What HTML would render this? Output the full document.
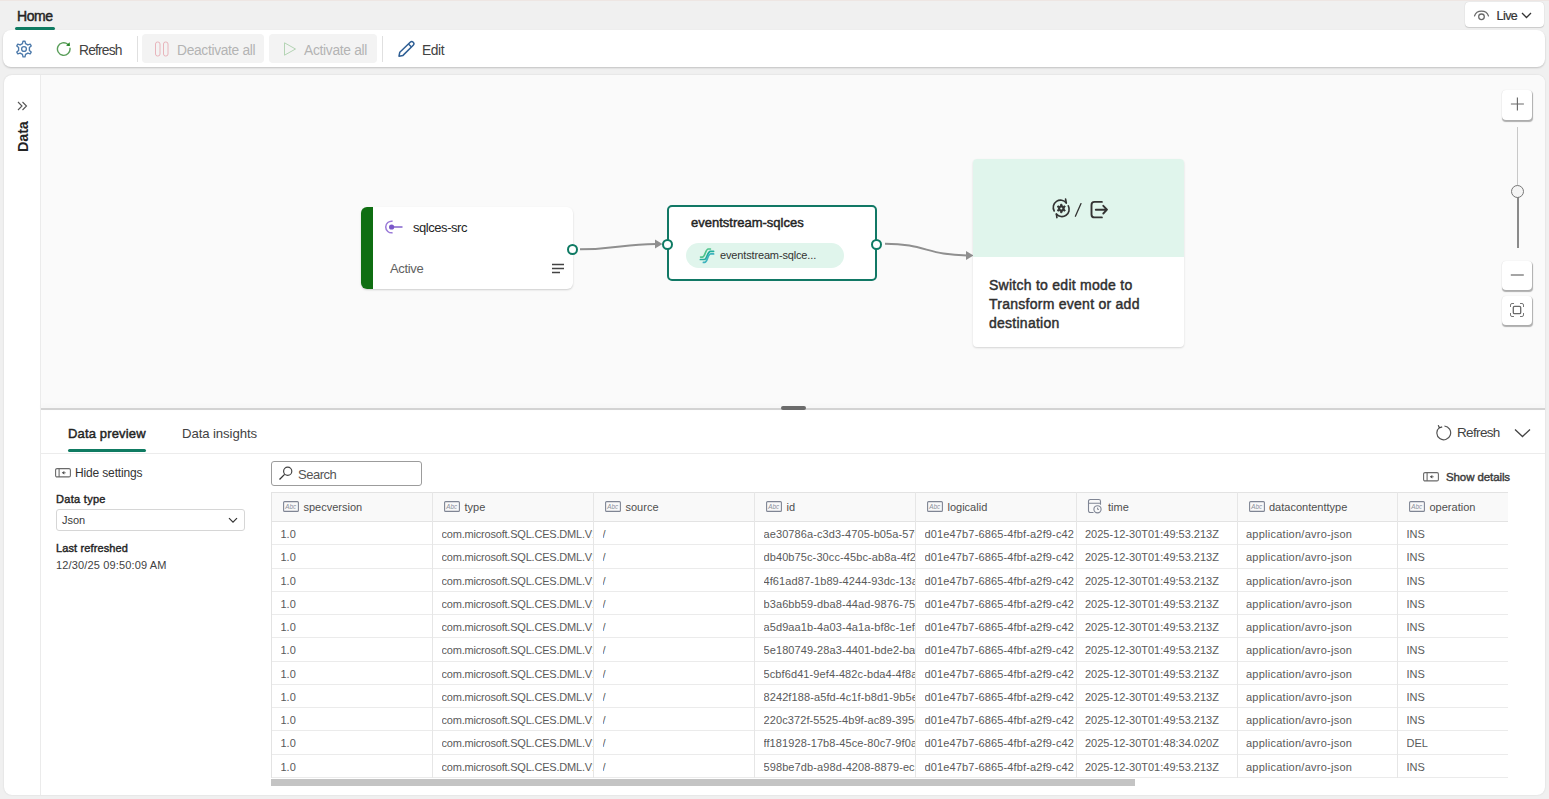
<!DOCTYPE html>
<html><head><meta charset="utf-8">
<style>
*{box-sizing:border-box;margin:0;padding:0}
html,body{width:1549px;height:799px;overflow:hidden}
body{background:#f0f0f0;font-family:"Liberation Sans",sans-serif;color:#242424;position:relative}
.a{position:absolute;white-space:nowrap}
.topline{left:0;top:0;width:1549px;height:1px;background:#eee6e3}
.hometab{left:17px;top:6.5px;font-size:14px;font-weight:normal;line-height:18px;color:#242424;letter-spacing:-0.4px;-webkit-text-stroke:0.45px #242424}
.homeul{left:15px;top:27px;width:40px;height:3px;border-radius:2px;background:#0f7b62}
.live{left:1465px;top:2px;width:79px;height:25px;background:#fff;border-radius:4px;box-shadow:0 1px 1px rgba(0,0,0,.14),0 0 1px rgba(0,0,0,.2)}
.toolbar{left:3px;top:30px;width:1542px;height:37px;background:#fff;border-radius:8px;box-shadow:0 1px 2px rgba(0,0,0,.2)}
.tbtxt{font-size:13.8px;line-height:16px;color:#424242;letter-spacing:-0.55px}
.disbtn{background:#f3f3f3;border-radius:4px}
.sep{width:1px;background:#e0e0e0}
.main{left:4px;top:75px;width:1541px;height:720px;background:#fff;border-radius:8px;box-shadow:0 0 2px rgba(0,0,0,.12);overflow:hidden}
.canvas{left:36px;top:0;width:1505px;height:333px;background:#fafafa}
.splitter{left:36px;top:333px;width:1505px;height:2px;background:#d3d3d3;box-shadow:0 -2px 4px rgba(0,0,0,.04)}
.th{font-size:11px;line-height:14px;color:#4f4f4f}
.td{font-size:11px;line-height:14px;color:#5a5a5a;overflow:hidden;text-overflow:clip}
.sidebar-div{left:36px;top:0;width:1px;height:720px;background:#ebebeb}
</style></head><body>
<div class="a topline"></div>
<div class="a hometab">Home</div>
<div class="a homeul"></div>
<div class="a live"></div>
<svg class="a" style="left:1473px;top:8px" width="17" height="13" viewBox="0 0 17 13"><path d="M1.5 8a7.3 6.8 0 0 1 14 0" fill="none" stroke="#6a6a6a" stroke-width="1.2" stroke-linecap="round"/><circle cx="8.5" cy="8.8" r="2.8" fill="none" stroke="#6a6a6a" stroke-width="1.3"/></svg>
<div class="a" style="left:1496.5px;top:8.5px;font-size:12.5px;line-height:14px;color:#333;letter-spacing:-0.55px;-webkit-text-stroke:0.2px #333">Live</div>
<svg class="a" style="left:1521px;top:12px" width="11" height="7" viewBox="0 0 11 7"><path d="M1 1l4.5 4.5L10 1" fill="none" stroke="#333" stroke-width="1.3"/></svg>

<div class="a toolbar"></div>
<!-- gear -->
<svg class="a" style="left:14.2px;top:38.6px" width="20" height="20" viewBox="0 0 20 20"><path fill="none" stroke="#4d7aab" stroke-width="1.35" stroke-linejoin="round" d="M8.45 4.6 L9 2.2 L11 2.2 L11.55 4.6 L13.9 5.95 L16.2 5.2 L17.2 6.9 L15.4 8.55 L15.4 11.45 L17.2 13.1 L16.2 14.8 L13.9 14.05 L11.55 15.4 L11 17.8 L9 17.8 L8.45 15.4 L6.1 14.05 L3.8 14.8 L2.8 13.1 L4.6 11.45 L4.6 8.55 L2.8 6.9 L3.8 5.2 L6.1 5.95Z"/><circle cx="10" cy="10" r="2.4" fill="none" stroke="#4d7aab" stroke-width="1.35"/></svg>
<!-- refresh -->
<svg class="a" style="left:56px;top:41px" width="16" height="16" viewBox="0 0 16 16"><path fill="none" stroke="#5a9e5a" stroke-width="1.4" stroke-linecap="round" d="M14 7.3A6.3 6.3 0 1 1 11.8 3.2"/><path fill="#1a7f1a" d="M13.6 1.2l.3 3.9-3.8-.4z"/></svg>
<div class="a tbtxt" style="left:79px;top:42.5px;color:#424242;letter-spacing:-0.8px">Refresh</div>
<div class="a sep" style="left:137px;top:36px;height:26px"></div>
<div class="a disbtn" style="left:142px;top:34px;width:122px;height:29px"></div>
<svg class="a" style="left:154px;top:41px" width="16" height="16" viewBox="0 0 16 16"><rect x="1.5" y="1" width="4.5" height="14" rx="2" fill="none" stroke="#e8b4bb" stroke-width="1"/><rect x="9.5" y="1" width="4.5" height="14" rx="2" fill="none" stroke="#e8b4bb" stroke-width="1"/></svg>
<div class="a tbtxt" style="left:177px;top:42.5px;color:#b3b3b3;letter-spacing:-0.33px">Deactivate all</div>
<div class="a disbtn" style="left:269px;top:34px;width:108px;height:29px"></div>
<svg class="a" style="left:282px;top:41px" width="16" height="16" viewBox="0 0 16 16"><path d="M2.5 1.8v12.4l11-6.2z" fill="none" stroke="#b4d4b4" stroke-width="1" stroke-linejoin="round"/></svg>
<div class="a tbtxt" style="left:304px;top:42.5px;color:#b3b3b3;letter-spacing:-0.3px">Activate all</div>
<div class="a sep" style="left:382px;top:36px;height:26px"></div>
<svg class="a" style="left:397px;top:40px" width="18" height="18" viewBox="0 0 18 18"><path d="M13.2 2.2a2.1 2.1 0 0 1 3 3L6 15.4 2 16.2l.8-4z" fill="none" stroke="#2e5e94" stroke-width="1.5" stroke-linejoin="round"/><path d="M11.5 4l2.7 2.7" stroke="#2e5e94" stroke-width="1.3"/></svg>
<div class="a tbtxt" style="left:422px;top:42.5px;color:#424242;letter-spacing:-0.4px">Edit</div>

<div class="a main">
  <div class="a canvas"></div>
  <div class="a splitter"></div>
  <div class="a sidebar-div"></div>
</div>

<!-- sidebar -->
<svg class="a" style="left:17px;top:101px" width="11" height="10" viewBox="0 0 11 10"><path d="M1 1l4 4-4 4M5.5 1l4 4-4 4" fill="none" stroke="#555" stroke-width="1.1"/></svg>
<div class="a" style="left:8px;top:129px;width:30px;height:16px;transform:rotate(-90deg);transform-origin:center;font-size:14.5px;font-weight:bold;line-height:16px;color:#242424;letter-spacing:-0.2px;text-align:center">Data</div>

<!-- source node -->
<div class="a" style="left:361px;top:207px;width:212px;height:82px;background:#fff;border-radius:6px;box-shadow:0 1px 2px rgba(0,0,0,.18);overflow:hidden"><div class="a" style="left:0;top:0;width:12px;height:82px;background:#0f6e12"></div></div>
<svg class="a" style="left:384px;top:219px" width="20" height="16" viewBox="0 0 20 16"><path d="M8.6 2.3A5.8 5.8 0 1 0 8.6 13.7" fill="none" stroke="#9a7ad8" stroke-width="1.5"/><circle cx="7.6" cy="8" r="2.6" fill="#7a58c9"/><path d="M7.6 8H18.5" stroke="#7a58c9" stroke-width="1.4"/></svg>
<div class="a" style="left:413px;top:220px;font-size:13px;line-height:16px;color:#242424;letter-spacing:-0.45px">sqlces-src</div>
<div class="a" style="left:390px;top:261px;font-size:13px;line-height:16px;color:#616161;letter-spacing:-0.35px">Active</div>
<svg class="a" style="left:551px;top:263px" width="14" height="11" viewBox="0 0 14 11"><path d="M1 1.5h12M1 5.5h12M1 9.5h8" stroke="#444" stroke-width="1.4"/></svg>

<!-- edges -->
<svg class="a" style="left:0;top:0" width="1549" height="799" viewBox="0 0 1549 799">
<path d="M580 249.3 C 618 249.3, 622 244, 656 244" fill="none" stroke="#8f8f8f" stroke-width="2"/>
<path d="M655 239.5l7.5 4.5-7.5 4.5z" fill="#8f8f8f"/>
<path d="M885 243.7 C 925 243.7, 928 255.4, 967 255.4" fill="none" stroke="#8f8f8f" stroke-width="2"/>
<path d="M966 250.9l7.5 4.5-7.5 4.5z" fill="#8f8f8f"/>
</svg>
<!-- source port -->
<div class="a" style="left:566.5px;top:243.5px;width:11px;height:11px;border-radius:50%;background:#fff;border:2px solid #0e7a63"></div>

<!-- eventstream node -->
<div class="a" style="left:667px;top:205px;width:210px;height:76px;background:#fff;border:2px solid #117865;border-radius:5px"></div>
<div class="a" style="left:691px;top:215px;font-size:13px;line-height:16px;color:#242424;letter-spacing:0px;-webkit-text-stroke:0.45px #242424">eventstream-sqlces</div>
<div class="a" style="left:686px;top:243px;width:158px;height:25px;border-radius:13px;background:#e0f5ec"></div>
<svg class="a" style="left:690px;top:240px" width="40" height="30" viewBox="0 0 40 30"><g fill="none" stroke-width="1.7" stroke-linecap="round"><path d="M10.6 17.1H12.3C15.3 17.1 15.3 9 18.3 9H20.4" stroke="#4fc28c"/><path d="M10.4 19.5H14.3C17.3 19.5 17.3 11.3 20.3 11.3H23.6" stroke="#22ae9c"/><path d="M13.4 22.4H14.6C17.6 22.4 17.6 13.9 20.6 13.9H23.6" stroke="#3db3bd"/></g></svg>
<div class="a" style="left:720px;top:248px;font-size:11px;line-height:14px;color:#333;letter-spacing:-0.15px">eventstream-sqlce...</div>
<div class="a" style="left:662px;top:239px;width:11px;height:11px;border-radius:50%;background:#fff;border:2px solid #0e7a63"></div>
<div class="a" style="left:870.5px;top:239px;width:11px;height:11px;border-radius:50%;background:#fff;border:2px solid #0e7a63"></div>

<!-- destination card -->
<div class="a" style="left:973px;top:159px;width:211px;height:188px;background:#fff;border-radius:4px;box-shadow:0 1px 2px rgba(0,0,0,.15);overflow:hidden"><div class="a" style="left:0;top:0;width:211px;height:98px;background:#e0f5ec"></div></div>
<svg class="a" style="left:1045px;top:195px" width="70" height="30" viewBox="0 0 70 30">
<g fill="none" stroke="#333" stroke-width="1.6" stroke-linecap="round" stroke-linejoin="round">
<path d="M9.2 16A7.3 7.3 0 0 1 21.3 7.9"/><path d="M20.6 4.1L21.3 7.9"/>
<path d="M23.3 10.8A7.3 7.3 0 0 1 11.4 19.1"/><path d="M11.9 22.6L11.4 19.1"/>
<path fill="#333" stroke-width="0.9" d="M15.40 10.74 L15.70 9.24 L16.90 9.24 L17.20 10.74 L18.24 11.34 L19.69 10.85 L20.29 11.89 L19.14 12.90 L19.14 14.10 L20.29 15.11 L19.69 16.15 L18.24 15.66 L17.20 16.26 L16.90 17.76 L15.70 17.76 L15.40 16.26 L14.36 15.66 L12.91 16.15 L12.31 15.11 L13.46 14.10 L13.46 12.90 L12.31 11.89 L12.91 10.85 L14.36 11.34Z"/>
<circle cx="16.3" cy="13.5" r="1.1" fill="#e0f5ec" stroke="none"/><path stroke-width="1.3" d="M30.4 21.2L36 8.6"/>
<path stroke-width="1.9" d="M56.9 6.9H49.5A3 3 0 0 0 46.5 9.9V19.4A3 3 0 0 0 49.5 22.4H56.9"/>
<path stroke-width="1.9" d="M50.8 14.7H61.8M58.3 10.8L62 14.7 58.3 18.5"/>
</g></svg>
<div class="a" style="left:989px;top:275.5px;font-size:14px;font-weight:normal;line-height:19px;color:#2f2f2f;letter-spacing:0.26px;-webkit-text-stroke:0.45px #2f2f2f;white-space:normal;width:195px">Switch to edit mode to<br>Transform event or add<br>destination</div>

<!-- zoom controls -->
<div class="a" style="left:1502px;top:90px;width:30px;height:30px;background:#fff;border-radius:4px;box-shadow:0.5px 1.5px 1px rgba(0,0,0,.3),0 0 1px rgba(0,0,0,.12)"></div>
<svg class="a" style="left:1508px;top:95px" width="18" height="18" viewBox="0 0 18 18"><path d="M9.4 2.6v13M2.9 9h13" stroke="#6a6a6a" stroke-width="1.15"/></svg>
<div class="a" style="left:1517px;top:127px;width:1px;height:64px;background:#c8c8c8"></div>
<div class="a" style="left:1516.5px;top:191px;width:2px;height:57px;background:#8a8a8a"></div>
<div class="a" style="left:1511px;top:184.5px;width:13px;height:13px;border-radius:50%;background:#f5f5f5;border:1.5px solid #777"></div>
<div class="a" style="left:1502px;top:261px;width:30px;height:29px;background:#fff;border-radius:4px;box-shadow:0.5px 1.5px 1px rgba(0,0,0,.3),0 0 1px rgba(0,0,0,.12)"></div>
<svg class="a" style="left:1508px;top:266px" width="18" height="18" viewBox="0 0 18 18"><path d="M2.8 9h13" stroke="#6a6a6a" stroke-width="1.2"/></svg>
<div class="a" style="left:1502px;top:296px;width:30px;height:29px;background:#fff;border-radius:4px;box-shadow:0.5px 1.5px 1px rgba(0,0,0,.3),0 0 1px rgba(0,0,0,.12)"></div>
<svg class="a" style="left:1509px;top:302px" width="16" height="16" viewBox="0 0 16 16"><path d="M1.5 5V3a1.5 1.5 0 0 1 1.5-1.5h2M11 1.5h2A1.5 1.5 0 0 1 14.5 3v2M14.5 11v2a1.5 1.5 0 0 1-1.5 1.5h-2M5 14.5H3A1.5 1.5 0 0 1 1.5 13v-2" fill="none" stroke="#777" stroke-width="1"/><rect x="4.3" y="4.3" width="7.4" height="7.4" rx="1.2" fill="none" stroke="#6a6a6a" stroke-width="1.3"/></svg>

<!-- splitter handle -->
<div class="a" style="left:781px;top:406px;width:25px;height:4px;border-radius:2px;background:#6b6b6b"></div>
<!-- tabs -->
<div class="a" style="left:68px;top:426px;font-size:13px;line-height:16px;color:#242424;letter-spacing:0.15px;-webkit-text-stroke:0.45px #242424">Data preview</div>
<div class="a" style="left:182px;top:426px;font-size:13.2px;line-height:16px;color:#424242;letter-spacing:-0.1px">Data insights</div>
<div class="a" style="left:68px;top:449px;width:78px;height:3px;border-radius:2px;background:#0f7b62"></div>
<div class="a" style="left:40px;top:453px;width:1505px;height:1px;background:#ececec"></div>
<svg class="a" style="left:1435px;top:423.5px" width="18" height="17" viewBox="0 0 18 17"><path d="M4.3 3.6A6.9 6.9 0 1 0 9.4 2" fill="none" stroke="#555" stroke-width="1.2"/><path d="M3.2 1.2l1.3 2.6 2.7-.9" fill="none" stroke="#444" stroke-width="1.2"/></svg>
<div class="a" style="left:1457px;top:424.5px;font-size:13.5px;line-height:16px;color:#424242;letter-spacing:-0.65px">Refresh</div>
<svg class="a" style="left:1514px;top:428px" width="17" height="10" viewBox="0 0 17 10"><path d="M1 1.5l7.5 7 7.5-7" fill="none" stroke="#444" stroke-width="1.3"/></svg>
<!-- settings -->
<svg class="a" style="left:55.2px;top:467.5px" width="16" height="10" viewBox="0 0 16 10"><rect x="0.6" y="0.6" width="14.8" height="8.3" rx="1.4" fill="none" stroke="#6a6a6a" stroke-width="1.1"/><path d="M4.1 .6v8.3" stroke="#6a6a6a" stroke-width="1.1"/><path d="M6.8 4.75L9.3 2.9v3.7z" fill="#444"/><path d="M8.5 4.75h2.2" stroke="#777" stroke-width="1"/></svg>
<div class="a" style="left:75px;top:466px;font-size:12px;line-height:14px;color:#333;letter-spacing:-0.15px">Hide settings</div>
<div class="a" style="left:56px;top:492px;font-size:11px;line-height:14px;color:#242424;letter-spacing:0.3px;-webkit-text-stroke:0.4px #242424">Data type</div>
<div class="a" style="left:56px;top:509px;width:189px;height:22px;border:1px solid #d6d6d6;border-radius:3px;background:#fff"></div>
<div class="a" style="left:62px;top:513px;font-size:11px;line-height:14px;color:#3a3a3a">Json</div>
<svg class="a" style="left:228px;top:516.5px" width="10" height="7" viewBox="0 0 10 7"><path d="M1 1.2l4 4 4-4" fill="none" stroke="#333" stroke-width="1.2"/></svg>
<div class="a" style="left:56px;top:541px;font-size:11px;line-height:14px;color:#242424;letter-spacing:0.12px;-webkit-text-stroke:0.4px #242424">Last refreshed</div>
<div class="a" style="left:56px;top:558px;font-size:11px;line-height:14px;color:#424242;letter-spacing:0.15px">12/30/25 09:50:09 AM</div>
<!-- search -->
<div class="a" style="left:271px;top:461px;width:151px;height:25px;border:1px solid #9c9c9c;border-radius:3px;background:#fff"></div>
<svg class="a" style="left:278px;top:465px" width="16" height="16" viewBox="0 0 16 16"><circle cx="9.7" cy="6.3" r="4.1" fill="none" stroke="#444" stroke-width="1.2"/><path d="M6.6 9.4L1.5 14.5" stroke="#333" stroke-width="1.3"/></svg>
<div class="a" style="left:298px;top:466.5px;font-size:13px;line-height:16px;color:#555;letter-spacing:-0.5px">Search</div>
<!-- show details -->
<svg class="a" style="left:1423.3px;top:471.5px" width="16" height="10" viewBox="0 0 16 10"><rect x="0.6" y="0.6" width="14.8" height="8.3" rx="1.4" fill="none" stroke="#6a6a6a" stroke-width="1.1"/><path d="M4.1 .6v8.3" stroke="#6a6a6a" stroke-width="1.1"/><path d="M6.8 4.75L9.3 2.9v3.7z" fill="#444"/><path d="M8.5 4.75h2.2" stroke="#777" stroke-width="1"/></svg>
<div class="a" style="left:1446px;top:470px;font-size:11.5px;line-height:14px;color:#3a3a3a;letter-spacing:-0.1px;-webkit-text-stroke:0.4px #3a3a3a">Show details</div>
<!-- table -->
<div class="a" style="left:271px;top:492px;width:1237px;height:286px;border-top:1px solid #e3e3e3;border-left:1px solid #e3e3e3"></div>
<div class="a" style="left:272px;top:493px;width:1236px;height:29px;background:#f9f9f9;border-bottom:1px solid #e3e3e3"></div>
<div class="a" style="left:272px;top:544.27px;width:1236px;height:1px;background:#ebebeb"></div>
<div class="a" style="left:272px;top:567.54px;width:1236px;height:1px;background:#ebebeb"></div>
<div class="a" style="left:272px;top:590.81px;width:1236px;height:1px;background:#ebebeb"></div>
<div class="a" style="left:272px;top:614.08px;width:1236px;height:1px;background:#ebebeb"></div>
<div class="a" style="left:272px;top:637.35px;width:1236px;height:1px;background:#ebebeb"></div>
<div class="a" style="left:272px;top:660.62px;width:1236px;height:1px;background:#ebebeb"></div>
<div class="a" style="left:272px;top:683.89px;width:1236px;height:1px;background:#ebebeb"></div>
<div class="a" style="left:272px;top:707.16px;width:1236px;height:1px;background:#ebebeb"></div>
<div class="a" style="left:272px;top:730.43px;width:1236px;height:1px;background:#ebebeb"></div>
<div class="a" style="left:272px;top:753.70px;width:1236px;height:1px;background:#ebebeb"></div>
<div class="a" style="left:272px;top:776.97px;width:1236px;height:1px;background:#ebebeb"></div>
<div class="a" style="left:432px;top:492px;width:1px;height:286px;background:#e6e6e6"></div>
<div class="a" style="left:593px;top:492px;width:1px;height:286px;background:#e6e6e6"></div>
<div class="a" style="left:754px;top:492px;width:1px;height:286px;background:#e6e6e6"></div>
<div class="a" style="left:915px;top:492px;width:1px;height:286px;background:#e6e6e6"></div>
<div class="a" style="left:1075.5px;top:492px;width:1px;height:286px;background:#e6e6e6"></div>
<div class="a" style="left:1236.5px;top:492px;width:1px;height:286px;background:#e6e6e6"></div>
<div class="a" style="left:1397px;top:492px;width:1px;height:286px;background:#e6e6e6"></div>
<svg class="a" style="left:283px;top:500.5px" width="16" height="11" viewBox="0 0 16 11"><rect x="0.6" y="0.6" width="14.8" height="9.8" rx="1" fill="none" stroke="#7f8594" stroke-width="1.1"/><text x="2.3" y="7.8" font-family="Liberation Sans" font-size="6.3" font-style="italic" fill="#8a909c">Abc</text></svg>
<div class="a th" style="left:303.5px;top:500px">specversion</div>
<svg class="a" style="left:444px;top:500.5px" width="16" height="11" viewBox="0 0 16 11"><rect x="0.6" y="0.6" width="14.8" height="9.8" rx="1" fill="none" stroke="#7f8594" stroke-width="1.1"/><text x="2.3" y="7.8" font-family="Liberation Sans" font-size="6.3" font-style="italic" fill="#8a909c">Abc</text></svg>
<div class="a th" style="left:464.5px;top:500px">type</div>
<svg class="a" style="left:605px;top:500.5px" width="16" height="11" viewBox="0 0 16 11"><rect x="0.6" y="0.6" width="14.8" height="9.8" rx="1" fill="none" stroke="#7f8594" stroke-width="1.1"/><text x="2.3" y="7.8" font-family="Liberation Sans" font-size="6.3" font-style="italic" fill="#8a909c">Abc</text></svg>
<div class="a th" style="left:625.5px;top:500px">source</div>
<svg class="a" style="left:766px;top:500.5px" width="16" height="11" viewBox="0 0 16 11"><rect x="0.6" y="0.6" width="14.8" height="9.8" rx="1" fill="none" stroke="#7f8594" stroke-width="1.1"/><text x="2.3" y="7.8" font-family="Liberation Sans" font-size="6.3" font-style="italic" fill="#8a909c">Abc</text></svg>
<div class="a th" style="left:786.5px;top:500px">id</div>
<svg class="a" style="left:927px;top:500.5px" width="16" height="11" viewBox="0 0 16 11"><rect x="0.6" y="0.6" width="14.8" height="9.8" rx="1" fill="none" stroke="#7f8594" stroke-width="1.1"/><text x="2.3" y="7.8" font-family="Liberation Sans" font-size="6.3" font-style="italic" fill="#8a909c">Abc</text></svg>
<div class="a th" style="left:947.5px;top:500px">logicalid</div>
<svg class="a" style="left:1086.5px;top:498px" width="16" height="16" viewBox="0 0 16 16"><path d="M6.5 14.5H3.2a1.7 1.7 0 0 1-1.7-1.7V3.2A1.7 1.7 0 0 1 3.2 1.5h8.6a1.7 1.7 0 0 1 1.7 1.7V6.8M1.5 5.2h12" fill="none" stroke="#7f8594" stroke-width="1.1"/><circle cx="10.5" cy="11.3" r="3.6" fill="#f9f9f9" stroke="#7f8594" stroke-width="1.1"/><path d="M10.6 9.6v1.8h1.3" fill="none" stroke="#7f8594" stroke-width="1"/></svg>
<div class="a th" style="left:1108.0px;top:500px">time</div>
<svg class="a" style="left:1248.5px;top:500.5px" width="16" height="11" viewBox="0 0 16 11"><rect x="0.6" y="0.6" width="14.8" height="9.8" rx="1" fill="none" stroke="#7f8594" stroke-width="1.1"/><text x="2.3" y="7.8" font-family="Liberation Sans" font-size="6.3" font-style="italic" fill="#8a909c">Abc</text></svg>
<div class="a th" style="left:1269.0px;top:500px">datacontenttype</div>
<svg class="a" style="left:1409px;top:500.5px" width="16" height="11" viewBox="0 0 16 11"><rect x="0.6" y="0.6" width="14.8" height="9.8" rx="1" fill="none" stroke="#7f8594" stroke-width="1.1"/><text x="2.3" y="7.8" font-family="Liberation Sans" font-size="6.3" font-style="italic" fill="#8a909c">Abc</text></svg>
<div class="a th" style="left:1429.5px;top:500px">operation</div>
<div class="a td" style="left:280.5px;top:527.00px;width:151.5px">1.0</div>
<div class="a td" style="left:441.5px;top:527.00px;width:151.5px;letter-spacing:-0.2px">com.microsoft.SQL.CES.DML.V1.Insert</div>
<div class="a td" style="left:602.5px;top:527.00px;width:151.5px">/</div>
<div class="a td" style="left:763.5px;top:527.00px;width:151.5px;letter-spacing:0.1px">ae30786a-c3d3-4705-b05a-57f2a1c9</div>
<div class="a td" style="left:924.5px;top:527.00px;width:151px;letter-spacing:0.15px">d01e47b7-6865-4fbf-a2f9-c42</div>
<div class="a td" style="left:1085px;top:527.00px;width:151.5px">2025-12-30T01:49:53.213Z</div>
<div class="a td" style="left:1246px;top:527.00px;width:151px;letter-spacing:0.25px">application/avro-json</div>
<div class="a td" style="left:1406.5px;top:527.00px;width:101.5px">INS</div>
<div class="a td" style="left:280.5px;top:550.27px;width:151.5px">1.0</div>
<div class="a td" style="left:441.5px;top:550.27px;width:151.5px;letter-spacing:-0.2px">com.microsoft.SQL.CES.DML.V1.Insert</div>
<div class="a td" style="left:602.5px;top:550.27px;width:151.5px">/</div>
<div class="a td" style="left:763.5px;top:550.27px;width:151.5px;letter-spacing:0.1px">db40b75c-30cc-45bc-ab8a-4f2e9d1b</div>
<div class="a td" style="left:924.5px;top:550.27px;width:151px;letter-spacing:0.15px">d01e47b7-6865-4fbf-a2f9-c42</div>
<div class="a td" style="left:1085px;top:550.27px;width:151.5px">2025-12-30T01:49:53.213Z</div>
<div class="a td" style="left:1246px;top:550.27px;width:151px;letter-spacing:0.25px">application/avro-json</div>
<div class="a td" style="left:1406.5px;top:550.27px;width:101.5px">INS</div>
<div class="a td" style="left:280.5px;top:573.54px;width:151.5px">1.0</div>
<div class="a td" style="left:441.5px;top:573.54px;width:151.5px;letter-spacing:-0.2px">com.microsoft.SQL.CES.DML.V1.Insert</div>
<div class="a td" style="left:602.5px;top:573.54px;width:151.5px">/</div>
<div class="a td" style="left:763.5px;top:573.54px;width:151.5px;letter-spacing:0.1px">4f61ad87-1b89-4244-93dc-13a7e5b2</div>
<div class="a td" style="left:924.5px;top:573.54px;width:151px;letter-spacing:0.15px">d01e47b7-6865-4fbf-a2f9-c42</div>
<div class="a td" style="left:1085px;top:573.54px;width:151.5px">2025-12-30T01:49:53.213Z</div>
<div class="a td" style="left:1246px;top:573.54px;width:151px;letter-spacing:0.25px">application/avro-json</div>
<div class="a td" style="left:1406.5px;top:573.54px;width:101.5px">INS</div>
<div class="a td" style="left:280.5px;top:596.81px;width:151.5px">1.0</div>
<div class="a td" style="left:441.5px;top:596.81px;width:151.5px;letter-spacing:-0.2px">com.microsoft.SQL.CES.DML.V1.Insert</div>
<div class="a td" style="left:602.5px;top:596.81px;width:151.5px">/</div>
<div class="a td" style="left:763.5px;top:596.81px;width:151.5px;letter-spacing:0.1px">b3a6bb59-dba8-44ad-9876-75c1d3e8</div>
<div class="a td" style="left:924.5px;top:596.81px;width:151px;letter-spacing:0.15px">d01e47b7-6865-4fbf-a2f9-c42</div>
<div class="a td" style="left:1085px;top:596.81px;width:151.5px">2025-12-30T01:49:53.213Z</div>
<div class="a td" style="left:1246px;top:596.81px;width:151px;letter-spacing:0.25px">application/avro-json</div>
<div class="a td" style="left:1406.5px;top:596.81px;width:101.5px">INS</div>
<div class="a td" style="left:280.5px;top:620.08px;width:151.5px">1.0</div>
<div class="a td" style="left:441.5px;top:620.08px;width:151.5px;letter-spacing:-0.2px">com.microsoft.SQL.CES.DML.V1.Insert</div>
<div class="a td" style="left:602.5px;top:620.08px;width:151.5px">/</div>
<div class="a td" style="left:763.5px;top:620.08px;width:151.5px;letter-spacing:0.1px">a5d9aa1b-4a03-4a1a-bf8c-1ef4b6a2</div>
<div class="a td" style="left:924.5px;top:620.08px;width:151px;letter-spacing:0.15px">d01e47b7-6865-4fbf-a2f9-c42</div>
<div class="a td" style="left:1085px;top:620.08px;width:151.5px">2025-12-30T01:49:53.213Z</div>
<div class="a td" style="left:1246px;top:620.08px;width:151px;letter-spacing:0.25px">application/avro-json</div>
<div class="a td" style="left:1406.5px;top:620.08px;width:101.5px">INS</div>
<div class="a td" style="left:280.5px;top:643.35px;width:151.5px">1.0</div>
<div class="a td" style="left:441.5px;top:643.35px;width:151.5px;letter-spacing:-0.2px">com.microsoft.SQL.CES.DML.V1.Insert</div>
<div class="a td" style="left:602.5px;top:643.35px;width:151.5px">/</div>
<div class="a td" style="left:763.5px;top:643.35px;width:151.5px;letter-spacing:0.1px">5e180749-28a3-4401-bde2-ba91c7d3</div>
<div class="a td" style="left:924.5px;top:643.35px;width:151px;letter-spacing:0.15px">d01e47b7-6865-4fbf-a2f9-c42</div>
<div class="a td" style="left:1085px;top:643.35px;width:151.5px">2025-12-30T01:49:53.213Z</div>
<div class="a td" style="left:1246px;top:643.35px;width:151px;letter-spacing:0.25px">application/avro-json</div>
<div class="a td" style="left:1406.5px;top:643.35px;width:101.5px">INS</div>
<div class="a td" style="left:280.5px;top:666.62px;width:151.5px">1.0</div>
<div class="a td" style="left:441.5px;top:666.62px;width:151.5px;letter-spacing:-0.2px">com.microsoft.SQL.CES.DML.V1.Insert</div>
<div class="a td" style="left:602.5px;top:666.62px;width:151.5px">/</div>
<div class="a td" style="left:763.5px;top:666.62px;width:151.5px;letter-spacing:0.1px">5cbf6d41-9ef4-482c-bda4-4f8a2e61</div>
<div class="a td" style="left:924.5px;top:666.62px;width:151px;letter-spacing:0.15px">d01e47b7-6865-4fbf-a2f9-c42</div>
<div class="a td" style="left:1085px;top:666.62px;width:151.5px">2025-12-30T01:49:53.213Z</div>
<div class="a td" style="left:1246px;top:666.62px;width:151px;letter-spacing:0.25px">application/avro-json</div>
<div class="a td" style="left:1406.5px;top:666.62px;width:101.5px">INS</div>
<div class="a td" style="left:280.5px;top:689.89px;width:151.5px">1.0</div>
<div class="a td" style="left:441.5px;top:689.89px;width:151.5px;letter-spacing:-0.2px">com.microsoft.SQL.CES.DML.V1.Insert</div>
<div class="a td" style="left:602.5px;top:689.89px;width:151.5px">/</div>
<div class="a td" style="left:763.5px;top:689.89px;width:151.5px;letter-spacing:0.1px">8242f188-a5fd-4c1f-b8d1-9b5e3a70</div>
<div class="a td" style="left:924.5px;top:689.89px;width:151px;letter-spacing:0.15px">d01e47b7-6865-4fbf-a2f9-c42</div>
<div class="a td" style="left:1085px;top:689.89px;width:151.5px">2025-12-30T01:49:53.213Z</div>
<div class="a td" style="left:1246px;top:689.89px;width:151px;letter-spacing:0.25px">application/avro-json</div>
<div class="a td" style="left:1406.5px;top:689.89px;width:101.5px">INS</div>
<div class="a td" style="left:280.5px;top:713.16px;width:151.5px">1.0</div>
<div class="a td" style="left:441.5px;top:713.16px;width:151.5px;letter-spacing:-0.2px">com.microsoft.SQL.CES.DML.V1.Insert</div>
<div class="a td" style="left:602.5px;top:713.16px;width:151.5px">/</div>
<div class="a td" style="left:763.5px;top:713.16px;width:151.5px;letter-spacing:0.1px">220c372f-5525-4b9f-ac89-395d1e2b</div>
<div class="a td" style="left:924.5px;top:713.16px;width:151px;letter-spacing:0.15px">d01e47b7-6865-4fbf-a2f9-c42</div>
<div class="a td" style="left:1085px;top:713.16px;width:151.5px">2025-12-30T01:49:53.213Z</div>
<div class="a td" style="left:1246px;top:713.16px;width:151px;letter-spacing:0.25px">application/avro-json</div>
<div class="a td" style="left:1406.5px;top:713.16px;width:101.5px">INS</div>
<div class="a td" style="left:280.5px;top:736.43px;width:151.5px">1.0</div>
<div class="a td" style="left:441.5px;top:736.43px;width:151.5px;letter-spacing:-0.2px">com.microsoft.SQL.CES.DML.V1.Insert</div>
<div class="a td" style="left:602.5px;top:736.43px;width:151.5px">/</div>
<div class="a td" style="left:763.5px;top:736.43px;width:151.5px;letter-spacing:0.1px">ff181928-17b8-45ce-80c7-9f0a4b13</div>
<div class="a td" style="left:924.5px;top:736.43px;width:151px;letter-spacing:0.15px">d01e47b7-6865-4fbf-a2f9-c42</div>
<div class="a td" style="left:1085px;top:736.43px;width:151.5px">2025-12-30T01:48:34.020Z</div>
<div class="a td" style="left:1246px;top:736.43px;width:151px;letter-spacing:0.25px">application/avro-json</div>
<div class="a td" style="left:1406.5px;top:736.43px;width:101.5px">DEL</div>
<div class="a td" style="left:280.5px;top:759.70px;width:151.5px">1.0</div>
<div class="a td" style="left:441.5px;top:759.70px;width:151.5px;letter-spacing:-0.2px">com.microsoft.SQL.CES.DML.V1.Insert</div>
<div class="a td" style="left:602.5px;top:759.70px;width:151.5px">/</div>
<div class="a td" style="left:763.5px;top:759.70px;width:151.5px;letter-spacing:0.1px">598be7db-a98d-4208-8879-ec3f6d28</div>
<div class="a td" style="left:924.5px;top:759.70px;width:151px;letter-spacing:0.15px">d01e47b7-6865-4fbf-a2f9-c42</div>
<div class="a td" style="left:1085px;top:759.70px;width:151.5px">2025-12-30T01:49:53.213Z</div>
<div class="a td" style="left:1246px;top:759.70px;width:151px;letter-spacing:0.25px">application/avro-json</div>
<div class="a td" style="left:1406.5px;top:759.70px;width:101.5px">INS</div>
<!-- scrollbar -->
<div class="a" style="left:271px;top:779px;width:864px;height:7px;background:#c4c4c4"></div>
</body></html>
